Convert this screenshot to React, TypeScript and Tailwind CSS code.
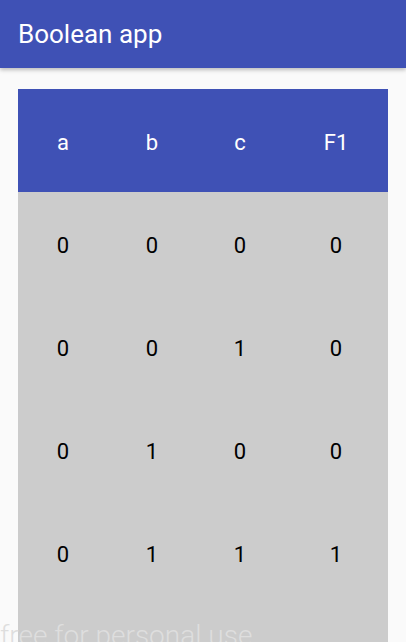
const rows = [
  ['0', '0', '0', '0'],
  ['0', '0', '1', '0'],
  ['0', '1', '0', '0'],
  ['0', '1', '1', '1'],
];

const cols = 'grid grid-cols-[90px_88px_88px_104px]';

export default function App() {
  return (
    <div className="relative h-[642px] w-[406px] overflow-hidden bg-[#fafafa] font-['Roboto',sans-serif]">
      <header className="relative z-10 flex h-[68px] items-center bg-[#3f51b5] px-[18px] shadow-[0_2px_4px_rgba(0,0,0,0.25)]">
        <h1 className="pb-[1px] text-[26px] leading-none text-white">Boolean app</h1>
      </header>

      <div className="px-[18px] pt-[21px]">
        <div className="w-[370px] bg-[#cccccc]">
          <div className={`${cols} h-[103px] items-center bg-[#3f51b5] pt-[3px] text-[22px] text-white`}>
            {['a', 'b', 'c', 'F1'].map((h) => (
              <div key={h} className="text-center">{h}</div>
            ))}
          </div>
          {rows.map((r, i) => (
            <div key={i} className={`${cols} h-[103px] items-center pt-[3px] text-[22px] text-black`}>
              {r.map((v, j) => (
                <div key={j} className="text-center">{v}</div>
              ))}
            </div>
          ))}
          {/* rest of the table, below the fold */}
          <div className="h-[103px]" />
        </div>
      </div>

      <div className="absolute bottom-[-8px] left-0 text-[28px] font-light leading-none text-[#dedede]">
        free for personal use
      </div>
    </div>
  );
}
